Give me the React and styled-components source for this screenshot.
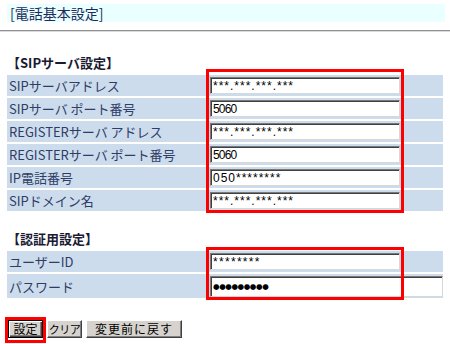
import React from "react";
import styled, { createGlobalStyle } from "styled-components";

const GlobalStyle = createGlobalStyle`
  html, body { margin: 0; padding: 0; background: #ffffff; }
  body { font-family: "Noto Sans CJK JP", "Liberation Sans", sans-serif; }
`;

const Page = styled.div`
  position: relative;
  width: 450px;
  height: 344px;
  overflow: hidden;
  padding-top: 4px;
  box-sizing: border-box;
`;

const TitleBar = styled.div`
  margin: 0 5px 0 7px;
  height: 18px;
  line-height: 18px;
  padding-left: 3px;
  background: #eaffff;
  color: #1b2b5b;
  font-size: 14px;
`;

const Rule = styled.div`
  margin-top: 8px;
  height: 0;
  border-top: 1px solid #8f8f8f;
  border-bottom: 1px solid #dcdcdc;
`;

const Section = styled.section`
  padding: 0 7px;
  margin-top: ${(p) => p.$top}px;
`;

const SectionTitle = styled.h2`
  margin: 0;
  font-size: 13px;
  line-height: 16px;
  font-weight: bold;
  color: #1a1a33;
`;

const Table = styled.div`
  margin-top: 4px;
  width: 436px;
  display: flex;
  flex-direction: column;
  gap: 2px;
`;

const Row = styled.div`
  display: grid;
  grid-template-columns: 198px 1fr;
  height: ${(p) => p.$h || 21}px;
  background: #ccdcec;
`;

const Label = styled.div`
  display: flex;
  align-items: center;
  padding-left: 2px;
  font-size: 13px;
  color: #2e3d66;
  white-space: nowrap;
`;

const Cell = styled.div`
  display: flex;
  align-items: center;
  padding-left: 5px;
`;

const Field = styled.input`
  box-sizing: border-box;
  width: ${(p) => p.$w || 190}px;
  height: ${(p) => p.$h || 17}px;
  margin: 0;
  padding: 0 2px;
  background: #ffffff;
  border: 1px solid;
  border-color: #7a7a7a #d8d8d8 #d8d8d8 #7a7a7a;
  box-shadow: inset 1px 1px 0 #404040;
  font-family: ${(p) => p.$font || '"Liberation Sans", sans-serif'};
  font-size: ${(p) => p.$size || 12}px;
  letter-spacing: ${(p) => p.$ls || 0}px;
  color: #000000;
  outline: none;
`;

const ButtonRow = styled.div`
  display: flex;
  gap: 4px;
  margin-top: 22px;
  padding-left: 8px;
`;

const Button = styled.button`
  box-sizing: border-box;
  width: ${(p) => p.$w}px;
  height: 18px;
  margin: 0;
  padding: 0;
  white-space: nowrap;
  overflow: visible;
  background: #d6d3ce;
  border: 1px solid;
  border-color: ${(p) => (p.$default ? "#000000" : "#ffffff #404040 #404040 #ffffff")};
  box-shadow: ${(p) =>
    p.$default
      ? "inset 1px 1px 0 #ffffff, inset -1px -1px 0 #404040, inset -2px -2px 0 #808080"
      : "inset -1px -1px 0 #808080"};
  font-family: "Noto Sans CJK JP", sans-serif;
  font-size: ${(p) => p.$size || 12}px;
  line-height: 16px;
  letter-spacing: ${(p) => p.$ls || 0}px;
  color: #000000;
`;

const Highlight = styled.div`
  position: absolute;
  box-sizing: border-box;
  border: 3px solid #ff0000;
  left: ${(p) => p.$x}px;
  top: ${(p) => p.$y}px;
  width: ${(p) => p.$w}px;
  height: ${(p) => p.$h}px;
  pointer-events: none;
`;

const sipRows = [
  { label: "SIPサーバアドレス", value: "***.***.***.***", ls: 1 },
  { label: "SIPサーバ ポート番号", value: "5060", ls: -0.8 },
  { label: "REGISTERサーバ アドレス", value: "***.***.***.***", ls: 1 },
  { label: "REGISTERサーバ ポート番号", value: "5060", ls: -0.8 },
  { label: "IP電話番号", value: "050********", ls: 1 },
  { label: "SIPドメイン名", value: "***.***.***.***", ls: 1 },
];

export default function App() {
  return (
    <>
      <GlobalStyle />
      <Page>
        <TitleBar>[電話基本設定]</TitleBar>
        <Rule />

        <Section $top={23}>
          <SectionTitle>【SIPサーバ設定】</SectionTitle>
          <Table>
            {sipRows.map((r) => (
              <Row key={r.label}>
                <Label>{r.label}</Label>
                <Cell>
                  <Field readOnly defaultValue={r.value} $ls={r.ls} />
                </Cell>
              </Row>
            ))}
          </Table>
        </Section>

        <Section $top={20}>
          <SectionTitle>【認証用設定】</SectionTitle>
          <Table>
            <Row>
              <Label>ユーザーID</Label>
              <Cell>
                <Field readOnly defaultValue="********" $ls={1.3} />
              </Cell>
            </Row>
            <Row $h={24}>
              <Label>パスワード</Label>
              <Cell>
                <Field
                  readOnly
                  defaultValue="●●●●●●●●●"
                  $w={233}
                  $h={21}
                  $size={7.5}
                  $font='"DejaVu Sans", sans-serif'
                  $ls={-0.4}
                />
              </Cell>
            </Row>
          </Table>
        </Section>

        <ButtonRow>
          <Button $w={35} $default>設定</Button>
          <Button $w={35} $size={11} $ls={-0.5}>クリア</Button>
          <Button $w={96} $ls={1}>変更前に戻す</Button>
        </ButtonRow>

        <Highlight $x={206} $y={69} $w={198} $h={144} />
        <Highlight $x={206} $y={247} $w={198} $h={53} />
        <Highlight $x={5} $y={317} $w={41} $h={26} />
      </Page>
    </>
  );
}
